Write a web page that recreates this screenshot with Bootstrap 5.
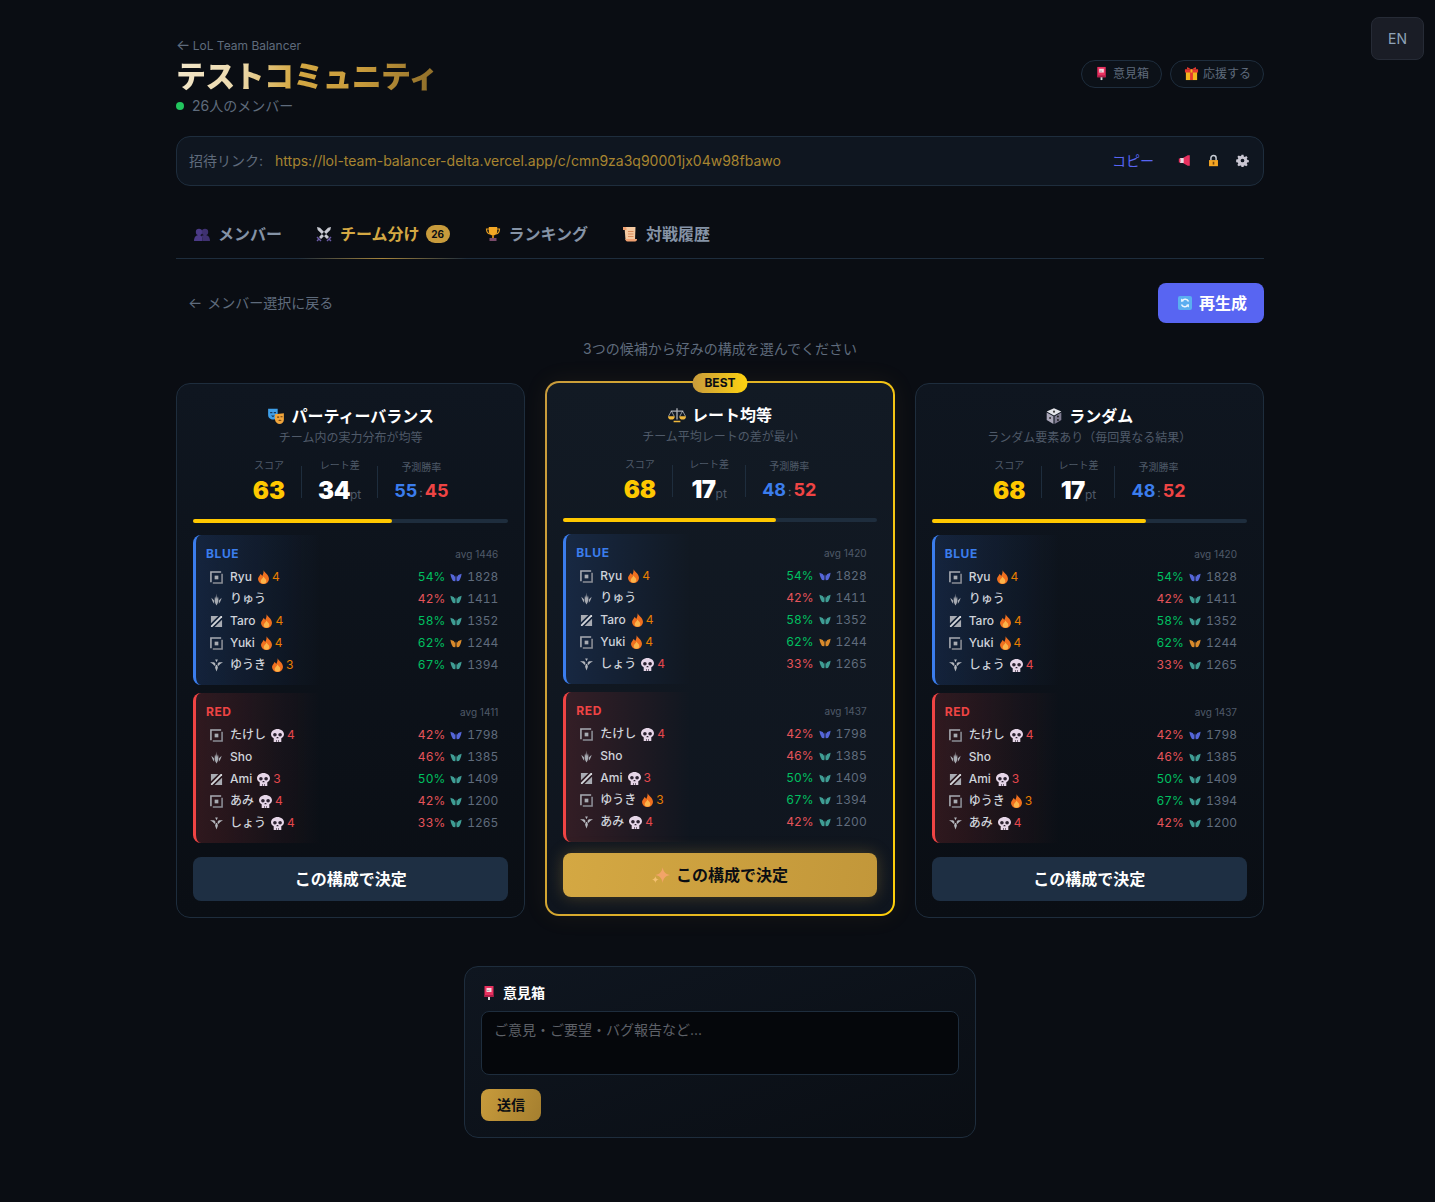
<!DOCTYPE html>
<html lang="ja">
<head>
  <meta charset="UTF-8">
  <meta name="viewport" content="width=device-width, initial-scale=1">
  <title>テストコミュニティ</title>
  <link href="https://cdn.jsdelivr.net/npm/bootstrap@5.3.3/dist/css/bootstrap.min.css" rel="stylesheet">
  <style>
    body {
      background-color: #0a0d13;
      color: #fff;
      font-family: Inter, "Noto Sans CJK JP", sans-serif;
      min-height: 1202px;
    }
    .ico { display: inline-block; flex-shrink: 0; vertical-align: middle; }
    .lang-btn {
      position: absolute; top: 17px; right: 11px;
      width: 53px; height: 43px;
      background: #1a1d26; border: 1px solid #262b36; border-radius: 8px;
      color: #8fa3b8; font-size: 14px;
    }
    .page-wrap { width: 1088px; margin-left: 176px; padding-top: 38px; }
    .back-top { color: #5f6b7c; font-size: 12px; line-height: 16px; }
    .back-arrow { font-size: 15px; line-height: 0; margin-right: -1px; }
    .page-title {
      font-size: 30px; font-weight: 800; line-height: 36px; margin: 4px 0 2px; letter-spacing: -.7px;
      background: linear-gradient(100deg, #f3e7cb 0%, #ecd9ac 25%, #d4a843 45%, #c89b3c 70%, #8a6a28 100%);
      -webkit-background-clip: text; background-clip: text; color: transparent;
    }
    .member-count { color: #5f6b7c; font-size: 14px; line-height: 20px; }
    .live-dot { width: 8px; height: 8px; border-radius: 50%; background: #22c55e; }
    .pill-row { margin-bottom: 7px; }
    .pill-btn {
      height: 28px; padding: 0 12px 0 13px; border: 1px solid #1e2d3d; border-radius: 14px;
      background: #0c1118; color: #5f6b7c; font-size: 12px; line-height: 1;
    }
    .pill-btn:first-child { padding-left: 12px; }
    .invite-bar {
      height: 50px; margin-top: 20px; padding: 0 14px 1px 12px;
      background: #0f1620; border: 1px solid #1e2d3d; border-radius: 14px;
      font-size: 14px;
    }
    .invite-label { color: #5f6b7c; }
    .invite-url { color: #a88530; margin-left: 12px; }
    .copy-link { color: #5865f2; margin-right: 24px; }
    .tab-row { margin-top: 24px; height: 49px; border-bottom: 1px solid #1e2d3d; }
    .tab-item {
      position: relative; padding: 0 16px 0 18px; height: 48px; gap: 8px;
      color: #8593a6; font-size: 16px; font-weight: 700;
    }
    .tab-on { color: #d4a843; }
    .tab-on::after {
      content: ""; position: absolute; left: 0; right: 0; bottom: -1px; height: 1px;
      background: linear-gradient(90deg, transparent, rgba(200, 155, 60, .8), transparent);
    }
    .tab-count {
      background: #c89b3c; color: #0a0d13; border-radius: 9px; width: 24px; height: 18px;
      font-size: 10px; font-weight: 700; line-height: 18px; text-align: center; margin: 0 1px 0 -2px;
    }
    .action-row { margin-top: 24px; height: 40px; }
    .back-members { color: #5f6b7c; font-size: 14px; margin-left: 12px; padding-bottom: 2px; word-spacing: 2px; }
    .regen-btn {
      height: 40px; width: 106px; padding: 0 0 0 2px; background: #5865f2; border: 0; border-radius: 8px;
      color: #fff; font-size: 16px; font-weight: 700; gap: 6px;
    }
    .pick-hint { color: #5f6b7c; font-size: 14px; line-height: 20px; text-align: center; margin: 16px 0 24px; }
    .pick-grid { display: grid; grid-template-columns: repeat(3, 1fr); gap: 20px; }
    .pick-card {
      position: relative; height: 535px; padding: 16px; display: flex; flex-direction: column;
      background: linear-gradient(180deg, #0f1620, #0a0e14);
      border: 1px solid #1e2d3d; border-radius: 14px;
    }
    .pick-best {
      transform: translateY(-2px); border: 2px solid transparent; padding-bottom: 17px;
      background: linear-gradient(180deg, #121a24, #0f151e) padding-box, linear-gradient(100deg, #c89b3c, #ffcf0a) border-box;
      box-shadow: 0 0 24px rgba(200, 155, 60, .08);
    }
    .best-tag {
      position: absolute; top: -10px; left: 50%; transform: translateX(-50%);
      width: 55px; height: 20px; border-radius: 10px; text-align: center;
      background: linear-gradient(90deg, #c89b3c, #ffd30f);
      color: #0a0d13; font-size: 12px; font-weight: 700; line-height: 20px;
    }
    .plan-title { font-size: 16px; font-weight: 700; line-height: 24px; margin-top: 4px; gap: 6px; }
    .plan-sub { color: #4f5a69; font-size: 12px; line-height: 18px; text-align: center; margin-top: 1px; }
    .stat-row { gap: 16px; margin-top: 11px; height: 48px; }
    .stat-cell { text-align: center; }
    .stat-sep { width: 1px; height: 32px; background: #1e2d3d; margin-top: 8px; }
    .stat-label { color: #4f5a69; font-size: 10px; line-height: 14px; margin-bottom: 5px; }
    .stat-win-cell { padding-top: 2px; }
    .stat-win-cell .stat-label { margin-bottom: 4px; }
    .stat-score { color: #ffc800; font-size: 24px; font-weight: 900; line-height: 28px; }
    .stat-diff { font-size: 24px; font-weight: 900; line-height: 28px; letter-spacing: -.5px; }
    .stat-unit { color: #4f5a69; font-size: 12px; font-weight: 400; letter-spacing: 0; }
    .stat-win { font-size: 18px; font-weight: 700; line-height: 26px; }
    .win-blue { color: #3b7ded; }
    .win-red { color: #ef4444; }
    .win-colon { color: #5f6b7c; font-size: 12px; font-weight: 400; margin: 0 2px; }
    .score-track { height: 4px; border-radius: 2px; background: #1e2d3d; margin-top: 13px; flex-shrink: 0; }
    .score-fill { height: 4px; border-radius: 2px; background: #ffc800; }
    .team-box { height: 150px; border-left: 3px solid; border-radius: 8px; padding: 10px 10px 0 10px; }
    .team-blue { margin-top: 12px; border-color: #3b7ded; background: linear-gradient(90deg, rgba(59, 125, 237, .16), transparent 40%); }
    .team-red { margin-top: 8px; border-color: #ef4444; background: linear-gradient(90deg, rgba(239, 68, 68, .16), transparent 40%); }
    .team-head { height: 18px; margin-bottom: 3px; }
    .team-name { font-size: 12px; font-weight: 700; letter-spacing: .6px; padding-bottom: 1px; }
    .team-blue .team-name { color: #3b7ded; }
    .team-red .team-name { color: #ef4444; }
    .team-avg { color: #4f5a69; font-size: 10px; }
    .player-row { height: 22px; padding-left: 4px; font-size: 12px; line-height: 22px; font-variant-numeric: tabular-nums; }
    .player-name { color: #cfd3da; font-weight: 500; margin-left: 7px; }
    .streak { margin-left: 6px; gap: 3px; }
    .streak-hot { color: #e67e00; }
    .streak-cold { color: #e5484d; margin-left: 5px; }
    .win-up { color: #00c060; }
    .win-down { color: #e5545a; }
    .rate-num { color: #5f6b7c; text-align: right; margin-left: 5px; }
    .rank-ico { margin-left: 5px; }
    .pick-btn {
      margin-top: auto; height: 44px; width: 100%; border: 0; border-radius: 8px;
      background: #1e2f43; color: #fff; font-size: 16px; font-weight: 700; gap: 6px; flex-shrink: 0;
    }
    .pick-best .pick-btn {
      background: linear-gradient(100deg, #d4a843, #c2973a); color: #0a0d13;
      box-shadow: 0 0 16px rgba(200, 155, 60, .3);
    }
    .feedback-box {
      width: 512px; height: 172px; margin: 48px 0 0 288px; padding: 16px;
      background: linear-gradient(160deg, #0f1620, #0a0e14);
      border: 1px solid #1e2d3d; border-radius: 14px;
    }
    .feedback-title { font-size: 14px; font-weight: 700; line-height: 20px; gap: 6px; }
    .feedback-input {
      display: block; width: 100%; height: 64px; margin-top: 8px; padding: 7px 12px; resize: none;
      background: #05070b; border: 1px solid #1e2d3d; border-radius: 8px; color: #fff; font-size: 14px;
    }
    .feedback-input::placeholder { color: #5e6168; }
    .send-btn {
      display: block; width: 60px; height: 32px; margin-top: 14px; padding: 0 0 2px; border: 0; border-radius: 8px;
      background: linear-gradient(110deg, #c89b3c, #a57f2f); color: #0a0d13; font-size: 14px; font-weight: 700;
    }
  </style>
</head>
<body>
  <!-- shared icons -->
  <svg width="0" height="0" class="position-absolute">
    <symbol id="i-top" viewBox="1 1 14 14"><path fill="none" stroke="#a8abb2" stroke-width="1.700" d="M2 13V2h11"/><path fill="none" stroke="#8a8d95" stroke-width="1.700" d="M14 4v10H4"/><rect x="6" y="6" width="4" height="4" fill="#a8abb2"/></symbol>
    <symbol id="i-jg" viewBox="1.500 1.500 13 14"><path fill="#a8abb2" d="M8 15C6 12 5.500 9 6.500 5L7.500 8 8 2l.6 6 1-3c1 4 .4 7-1.600 10zM5.500 13C4 11 3 9 2.500 6.500L5.500 9.500zM10.500 13C12 11 13 9 13.500 6.500L10.500 9.500z"/></symbol>
    <symbol id="i-mid" viewBox="1 1 14 14"><path fill="#a8abb2" d="M2 2h8L2 10zM14 14H6l8-8z"/><path fill="#d4d6da" d="M12.500 2H14v1.500L3.500 14H2v-1.500z"/></symbol>
    <symbol id="i-sup" viewBox="1 1.500 14 14"><path fill="#b4b7bd" d="M6.500 2h3L8 5zM1 5h4.500L7 7 6 9 4 7zM15 5h-4.500L9 7l1 2 2-2zM7.200 8h1.600l.7 3L8 15l-1.500-4z"/></symbol>
    <symbol id="i-wing" viewBox="0 0 16 12"><path fill="currentColor" d="M.5 1 5 2.500l2 3V11L4 10.500 2.500 8 1.300 5zM15.500 1 11 2.500l-2 3V11l3-.5L13.500 8l1.200-3z"/><path fill="currentColor" opacity=".7" d="M7.300 3.500h1.400V10H7.300z"/></symbol>
    <symbol id="i-fire" viewBox="2.500 1 11 14"><path fill="#f0701f" d="M8 1c.5 2.500 5.500 4.500 5.500 9A5.300 5.300 0 0 1 8 15a5.300 5.300 0 0 1-5.500-5C2.500 8 4.500 7 5 5c1 .5 1.500 1.200 1.600 2C7.800 5.500 8.300 3.500 8 1z"/><path fill="#fbb44a" d="M8 7.500c.4 1.400 2.800 2.300 2.800 4.500a2.800 2.800 0 0 1-5.600 0c0-1.500 2.300-2.700 2.800-4.500z"/></symbol>
    <symbol id="i-skull" viewBox="1.500 1.500 13 13"><path fill="#e6d6e8" d="M8 1.500c3.500 0 6.500 2.300 6.500 5.300 0 1.900-1.200 3.200-2.700 3.900V14.500H4.200v-3.800C2.700 10 1.500 8.700 1.500 6.800c0-3 3-5.300 6.500-5.300z"/><circle cx="5.400" cy="7.300" r="1.800" fill="#2b2230"/><circle cx="10.600" cy="7.300" r="1.800" fill="#2b2230"/><path fill="#2b2230" d="M7.300 9.500h1.400l.4 1.300H6.900zM6.500 12.500h.6v2h-.6zM8.900 12.500h.6v2h-.6z"/></symbol>
    <symbol id="i-mask" viewBox="0 0 16 16"><path fill="#3f9fe8" d="M1 1.500h8.500V7c0 2.500-2 4-4.200 4S1 9.500 1 7z"/><path fill="#173a5a" d="M2.800 4.500h2v1h-2zM6 4.500h2v1H6zM3.500 7.500h3.500l-1.700 1.500z"/><path fill="#f0a53c" d="M7 6.500l8-1v5.500c0 2.500-1.800 4-3.800 4S7.500 13.500 7 11z"/><path fill="#6b3e0c" d="M9 8.500h1.800v1H9zM12 8.200h1.800v1H12zM9.800 12.500l1.700-1.500 1.700 1.200z"/></symbol>
    <symbol id="i-scale" viewBox="0 0 16 16"><path fill="#a8abb2" d="M7.400 2h1.200v10H7.400zM2.500 4h11v1h-11z"/><path fill="#f0b83c" d="M0 9h6a3 3 0 0 1-6 0zM10 9h6a3 3 0 0 1-6 0zM5 13h6v1.500H5z"/><path fill="none" stroke="#c9ccd2" stroke-width=".6" d="M3 4.500.5 9M3 4.500 5.500 9M13 4.500 10.500 9M13 4.500 15.500 9"/></symbol>
    <symbol id="i-dice" viewBox="0 0 16 16"><path fill="#e4e5ea" d="M8 1l6.500 3L8 7.500 1.500 4z"/><path fill="#a9a6b8" d="M1.500 4.800 7.500 8.300V15l-6-3.500z"/><path fill="#7e7b90" d="M14.500 4.800 8.500 8.300V15l6-3.500z"/><circle cx="8" cy="4.200" r="1" fill="#444"/><circle cx="4.500" cy="9.800" r=".9" fill="#333"/><circle cx="11.500" cy="8.500" r=".9" fill="#222"/><circle cx="11.500" cy="11.500" r=".9" fill="#222"/></symbol>
    <symbol id="i-people" viewBox="0 0 16 16"><circle cx="5" cy="6" r="3.200" fill="#4b3a86"/><circle cx="11" cy="6" r="3.200" fill="#3f3170"/><path fill="#4b3a86" d="M0 15c0-4 2-6 5-6s3.500 2 3.500 6z"/><path fill="#3f3170" d="M8.500 15c0-2.300-.2-3.800-1-5 .9-.7 2.300-1 3.500-1 3 0 5 2 5 6z"/></symbol>
    <symbol id="i-swords" viewBox="0 0 16 16"><path fill="#c8cad2" d="M1 1l3 .7L13 11l-2 2L1.700 4zM15 1l-3 .7L3 11l2 2 9.300-9z"/><path fill="#6a5aa5" d="M1.500 10.500l4 4-1 1-1.500-1.500L1.500 15.500.5 14.500 2 13 .5 11.500zM14.500 10.500l-4 4 1 1 1.500-1.500 1.500 1.500 1-1L14 13l1.500-1.500z"/></symbol>
    <symbol id="i-trophy" viewBox="0 0 16 16"><path fill="none" stroke="#e09a20" stroke-width="1.200" d="M4 3H1.500c0 3 1 4.500 3.500 5M12 3h2.500c0 3-1 4.500-3.500 5"/><path fill="#f4a825" d="M3.800 1h8.400v4.500C12.200 8 10 9.500 8 9.500S3.800 8 3.800 5.500z"/><path fill="#c27d16" d="M7 9h2v3H7z"/><path fill="#7a4a6a" d="M4.500 12h7v3h-7z"/></symbol>
    <symbol id="i-scroll" viewBox="0 0 16 16"><path fill="#f5c9a0" d="M2.500 1h11l-.5 13H3.500z"/><path fill="#f0a070" d="M1 1h2.500c1 0 1 1.500 1 3H1zM3.500 13H15c0 1.500-.5 2.500-2 2.500H5.500c-1.500 0-2-1-2-2.500z"/><path fill="#d98a5a" d="M6 5h5.500v1H6zM6 7.500h5.500v1H6zM6 10h5.500v1H6z"/></symbol>
    <symbol id="i-post" viewBox="0 0 16 16"><path fill="#e8305f" d="M3.500 1h9v11h-9z"/><path fill="#f8d4dc" d="M5.500 3h5v4h-5z"/><path fill="#a9a4b0" d="M6 5h2.500v1H6z"/><path fill="#b01d48" d="M3.500 10h9v2h-9z"/><path fill="#d8d8dc" d="M7 12h2v3H7z"/></symbol>
    <symbol id="i-gift" viewBox="0 0 16 16"><path fill="#f2b51f" d="M2 6h12v9H2z"/><path fill="#e5392f" d="M1 3.500h14V7H1zM6.500 3.500h3V15h-3z"/><path fill="#f2b51f" d="M7 3.500H9V7H7z"/><path fill="#e5392f" d="M3.500 1 7.500 3.500H3zM12.500 1 8.500 3.500H13z"/></symbol>
    <symbol id="i-mega" viewBox="0 0 16 16"><path fill="#e8305f" d="M12 1.500h2.500v13H12L6 11H2.500V5H6z"/><path fill="#e6dce2" d="M2.500 5H7v6H2.500z"/><path fill="#e8305f" d="M1 5.500h2v5H1z"/></symbol>
    <symbol id="i-lock" viewBox="0 0 16 16"><path fill="none" stroke="#c9ced6" stroke-width="1.800" d="M4.800 8V5a3.200 3.200 0 0 1 6.400 0v3"/><path fill="#f5a623" d="M2.500 7.500h11V15h-11z"/><path fill="#7a4a10" d="M7 9.500h2v3.500H7z"/></symbol>
    <symbol id="i-gear" viewBox="0 0 16 16"><path fill="#c9c6d2" fill-rule="evenodd" d="M6.800 1h2.400l.4 2 1.300.6 1.700-1.100 1.700 1.700-1.100 1.700.6 1.300 2 .4v2.400l-2 .4-.6 1.300 1.100 1.700-1.700 1.700-1.700-1.100-1.300.6-.4 2H6.800l-.4-2-1.300-.6-1.700 1.100-1.700-1.700 1.100-1.700-.6-1.300-2-.4V6.800l2-.4.6-1.300-1.100-1.700 1.700-1.700 1.700 1.100 1.300-.6zM8 5.700a2.300 2.300 0 1 0 0 4.600 2.300 2.300 0 0 0 0-4.600z"/></symbol>
    <symbol id="i-refresh" viewBox="0 0 16 16"><rect x="1" y="1" width="14" height="14" rx="2" fill="#5aaef0"/><path fill="none" stroke="#eaf5ff" stroke-width="1.500" d="M11.500 6.500A3.700 3.700 0 0 0 5 5.800M4.500 9.500A3.700 3.700 0 0 0 11 10.200"/><path fill="#eaf5ff" d="M4 3.500 4.200 7l3-1zM12 12.500 11.800 9l-3 1z"/></symbol>
    <symbol id="i-spark" viewBox="0 0 16 16"><path fill="#f2a468" d="M9.500 1c.6 4 2 5.700 6.500 7-4.500 1-5.900 3-6.500 7-.7-4-2.100-6-6.500-7 4.400-1.300 5.800-3 6.500-7z"/><path fill="#f4c070" d="M3 9c.4 1.800 1 2.600 3 3-2 .5-2.600 1.200-3 3-.4-1.800-1-2.500-3-3 2-.4 2.600-1.200 3-3z"/></symbol>
  </svg>

  <button type="button" class="lang-btn">EN</button>

  <main class="page-wrap">
    <header class="d-flex justify-content-between align-items-center">
      <div>
        <div class="back-top"><span class="back-arrow">←</span> LoL Team Balancer</div>
        <h1 class="page-title">テストコミュニティ</h1>
        <div class="member-count d-flex align-items-center gap-2"><span class="live-dot"></span>26人のメンバー</div>
      </div>
      <div class="pill-row d-flex gap-2">
        <button type="button" class="pill-btn d-flex align-items-center gap-1"><svg class="ico" width="15" height="15"><use href="#i-post"/></svg>意見箱</button>
        <button type="button" class="pill-btn d-flex align-items-center gap-1"><svg class="ico" width="15" height="15"><use href="#i-gift"/></svg>応援する</button>
      </div>
    </header>

    <section class="invite-bar d-flex align-items-center">
      <span class="invite-label">招待リンク:</span>
      <span class="invite-url">https://lol-team-balancer-delta.vercel.app/c/cmn9za3q90001jx04w98fbawo</span>
      <span class="copy-link ms-auto">コピー</span>
      <div class="d-flex gap-3">
        <svg class="ico" width="13" height="13"><use href="#i-mega"/></svg>
        <svg class="ico" width="13" height="13"><use href="#i-lock"/></svg>
        <svg class="ico" width="13" height="13"><use href="#i-gear"/></svg>
      </div>
    </section>

    <nav class="tab-row d-flex">
      <div class="tab-item d-flex align-items-center"><svg class="ico" width="16" height="16"><use href="#i-people"/></svg>メンバー</div>
      <div class="tab-item tab-on d-flex align-items-center"><svg class="ico" width="16" height="16"><use href="#i-swords"/></svg>チーム分け<span class="tab-count">26</span></div>
      <div class="tab-item d-flex align-items-center"><svg class="ico" width="16" height="16"><use href="#i-trophy"/></svg>ランキング</div>
      <div class="tab-item d-flex align-items-center"><svg class="ico" width="16" height="16"><use href="#i-scroll"/></svg>対戦履歴</div>
    </nav>

    <div class="action-row d-flex justify-content-between align-items-center">
      <span class="back-members"><span class="back-arrow">←</span> メンバー選択に戻る</span>
      <button type="button" class="regen-btn d-flex align-items-center justify-content-center"><svg class="ico" width="16" height="16"><use href="#i-refresh"/></svg>再生成</button>
    </div>

    <p class="pick-hint">3つの候補から好みの構成を選んでください</p>

    <div class="pick-grid" id="plans"></div>

    <section class="feedback-box">
      <div class="feedback-title d-flex align-items-center"><svg class="ico" width="16" height="16"><use href="#i-post"/></svg>意見箱</div>
      <textarea class="feedback-input" placeholder="ご意見・ご要望・バグ報告など..."></textarea>
      <button type="button" class="send-btn">送信</button>
    </section>
  </main>

  <script>
    // name, role, streak (+hot / -cold), win %, rank colour, rating
    const IND = "#5566d8", TEAL = "#3f9d94", ORG = "#d98a2b";
    const p = {
      ryu: ["Ryu", "top", 4, 54, IND, 1828],
      ryu2: ["りゅう", "jg", 0, 42, TEAL, 1411],
      taro: ["Taro", "mid", 4, 58, TEAL, 1352],
      yuki: ["Yuki", "top", 4, 62, ORG, 1244],
      takeshi: ["たけし", "top", -4, 42, IND, 1798],
      sho: ["Sho", "jg", 0, 46, TEAL, 1385],
      ami: ["Ami", "mid", -3, 50, TEAL, 1409]
    };
    const yuuki = r => ["ゆうき", r, 3, 67, TEAL, 1394];
    const shou = r => ["しょう", r, -4, 33, TEAL, 1265];
    const ami2 = r => ["あみ", r, -4, 42, TEAL, 1200];
    const blueB = [p.ryu, p.ryu2, p.taro, p.yuki, shou("sup")];
    const redB = [p.takeshi, p.sho, p.ami, yuuki("top"), ami2("sup")];

    const plans = [
      { icon: "mask", title: "パーティーバランス", sub: "チーム内の実力分布が均等", score: 63, diff: 34, blue: 55, red: 45,
        avgB: 1446, avgR: 1411,
        teamB: [p.ryu, p.ryu2, p.taro, p.yuki, yuuki("sup")],
        teamR: [p.takeshi, p.sho, p.ami, ami2("top"), shou("sup")] },
      { icon: "scale", title: "レート均等", sub: "チーム平均レートの差が最小", score: 68, diff: 17, blue: 48, red: 52,
        avgB: 1420, avgR: 1437, teamB: blueB, teamR: redB, best: true },
      { icon: "dice", title: "ランダム", sub: "ランダム要素あり（毎回異なる結果）", score: 68, diff: 17, blue: 48, red: 52,
        avgB: 1420, avgR: 1437, teamB: blueB, teamR: redB }
    ];

    const useIcon = (id, w, h, cls) => `<svg class="ico ${cls || ""}" width="${w}" height="${h || w}"><use href="#i-${id}"/></svg>`;

    function playerRow(pl) {
      const [name, role, streak, win, rankColor, rate] = pl;
      const hot = streak > 0;
      const streakHtml = streak === 0 ? "" :
        `<span class="streak d-flex align-items-center ${hot ? "streak-hot" : "streak-cold"}">${hot ? useIcon("fire", 11, 14) : useIcon("skull", 13)}${Math.abs(streak)}</span>`;
      return `<div class="player-row d-flex align-items-center">
        ${useIcon(role, 13)}<span class="player-name">${name}</span>${streakHtml}
        <span class="ms-auto ${win >= 50 ? "win-up" : "win-down"}">${win}%</span>
        <span class="rank-ico d-flex" style="color:${rankColor}">${useIcon("wing", 12, 9)}</span>
        <span class="rate-num">${rate}</span>
      </div>`;
    }

    function teamBox(label, cls, avg, players) {
      return `<div class="team-box ${cls}">
        <div class="team-head d-flex justify-content-between align-items-center">
          <span class="team-name">${label}</span><span class="team-avg">avg ${avg}</span>
        </div>
        ${players.map(playerRow).join("")}
      </div>`;
    }

    document.getElementById("plans").innerHTML = plans.map(c => `
      <article class="pick-card ${c.best ? "pick-best" : ""}">
        ${c.best ? '<div class="best-tag">BEST</div>' : ""}
        <div class="plan-title d-flex justify-content-center align-items-center">${useIcon(c.icon, 18)}${c.title}</div>
        <div class="plan-sub">${c.sub}</div>
        <div class="stat-row d-flex justify-content-center">
          <div class="stat-cell"><div class="stat-label">スコア</div><div class="stat-score">${c.score}</div></div>
          <div class="stat-sep"></div>
          <div class="stat-cell"><div class="stat-label">レート差</div><div class="stat-diff">${c.diff}<span class="stat-unit">pt</span></div></div>
          <div class="stat-sep"></div>
          <div class="stat-cell stat-win-cell"><div class="stat-label">予測勝率</div><div class="stat-win"><span class="win-blue">${c.blue}</span><span class="win-colon">:</span><span class="win-red">${c.red}</span></div></div>
        </div>
        <div class="score-track"><div class="score-fill" style="width:${c.score}%"></div></div>
        ${teamBox("BLUE", "team-blue", c.avgB, c.teamB)}
        ${teamBox("RED", "team-red", c.avgR, c.teamR)}
        <button type="button" class="pick-btn d-flex align-items-center justify-content-center">${c.best ? useIcon("spark", 18) : ""}この構成で決定</button>
      </article>`).join("");
  </script>
  <script src="https://cdn.jsdelivr.net/npm/bootstrap@5.3.3/dist/js/bootstrap.bundle.min.js"></script>
</body>
</html>
